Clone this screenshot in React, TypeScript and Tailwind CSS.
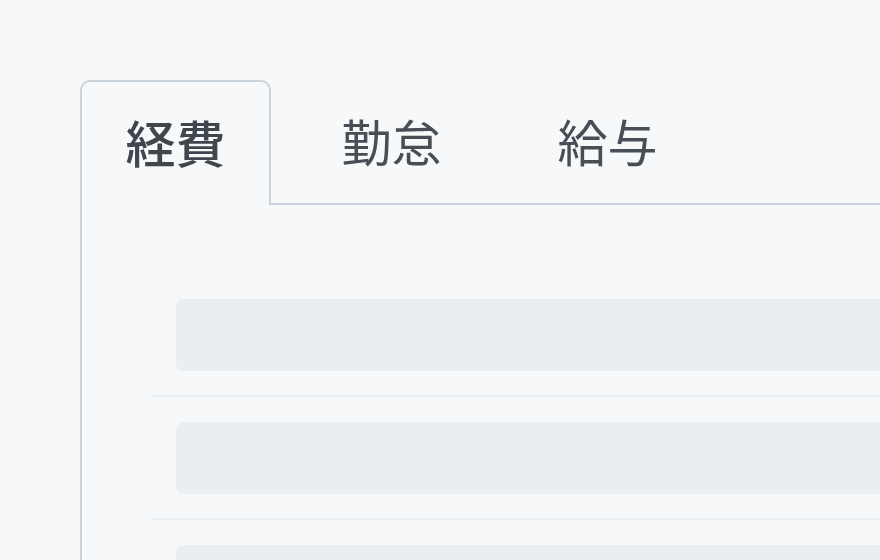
const tabs = ['経費', '勤怠', '給与'];

export default function App() {
  const active = 0;

  return (
    <div
      className="h-[560px] w-[880px] overflow-hidden bg-[#f6f8fa] pl-[80px] pt-[80px]"
      style={{ fontFamily: '"Noto Sans CJK JP", "Noto Sans", sans-serif' }}
    >
      <div className="w-[1200px]">
        {/* tab list */}
        <div className="flex h-[125px] gap-[25px] border-b-2 border-[#cad2db]">
          {tabs.map((t, i) => (
            <button
              key={t}
              className={
                i === active
                  ? '-mb-[2px] flex h-[125px] w-[191px] items-center justify-center rounded-t-[10px] border-2 border-b-0 border-[#cad2db] bg-[#f6f8fa] pb-[6px] text-[50px] leading-none font-medium text-[#3f464e]'
                  : 'flex h-[123px] w-[191px] items-center justify-center pb-[4px] text-[50px] leading-none text-[#474e56]'
              }
            >
              {t}
            </button>
          ))}
        </div>

        {/* panel */}
        <div className="border-l-2 border-[#cad2db] pl-[70px] pt-[69px]">
          {[0, 1, 2].map((r) => (
            <div key={r} className="border-b-2 border-[#eaeef2] pb-[24px] pt-[25px]">
              <div className="ml-[24px] h-[72px] rounded-[8px] bg-[#eaedf1]" />
            </div>
          ))}
        </div>
      </div>
    </div>
  );
}
